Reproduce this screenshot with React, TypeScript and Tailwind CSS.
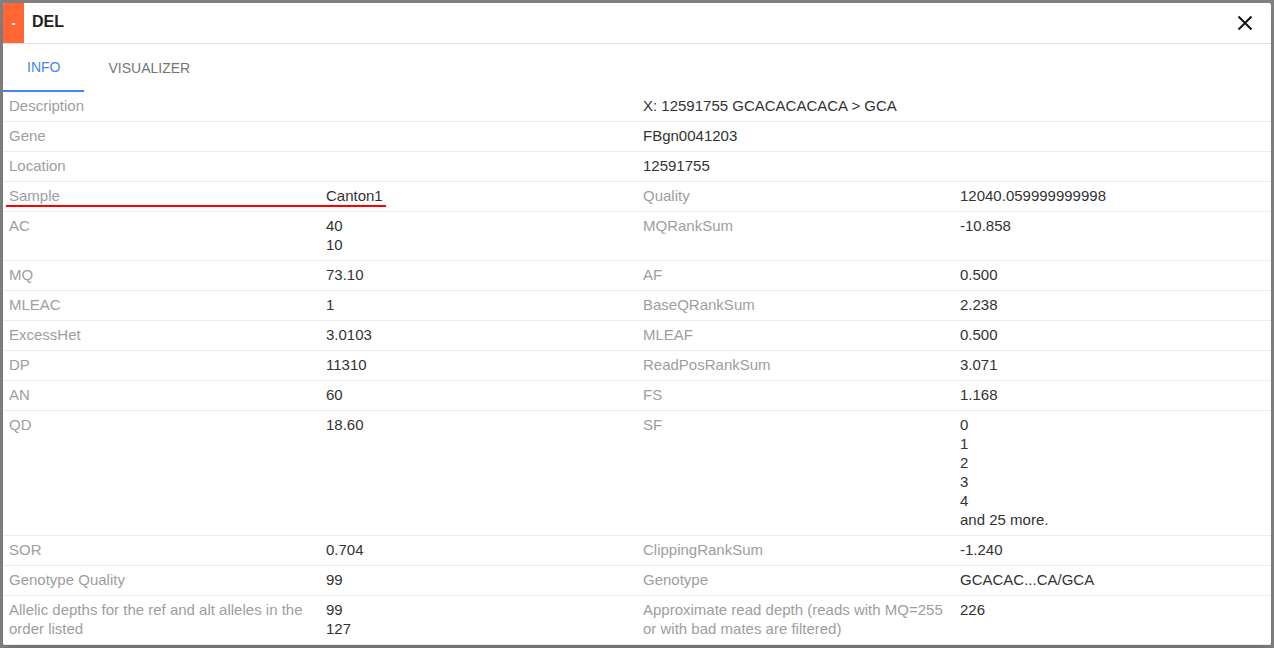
import React from "react";

type Cell = string | string[];
type Row = { kind: "wide"; label: string; value: string } | { kind: "pair"; a: [string, Cell]; b: [string, Cell] };

const rows: Row[] = [
  { kind: "wide", label: "Description", value: "X: 12591755 GCACACACACA > GCA" },
  { kind: "wide", label: "Gene", value: "FBgn0041203" },
  { kind: "wide", label: "Location", value: "12591755" },
  { kind: "pair", a: ["Sample", "Canton1"], b: ["Quality", "12040.059999999998"] },
  { kind: "pair", a: ["AC", ["40", "10"]], b: ["MQRankSum", "-10.858"] },
  { kind: "pair", a: ["MQ", "73.10"], b: ["AF", "0.500"] },
  { kind: "pair", a: ["MLEAC", "1"], b: ["BaseQRankSum", "2.238"] },
  { kind: "pair", a: ["ExcessHet", "3.0103"], b: ["MLEAF", "0.500"] },
  { kind: "pair", a: ["DP", "11310"], b: ["ReadPosRankSum", "3.071"] },
  { kind: "pair", a: ["AN", "60"], b: ["FS", "1.168"] },
  { kind: "pair", a: ["QD", "18.60"], b: ["SF", ["0", "1", "2", "3", "4", "and 25 more."]] },
  { kind: "pair", a: ["SOR", "0.704"], b: ["ClippingRankSum", "-1.240"] },
  { kind: "pair", a: ["Genotype Quality", "99"], b: ["Genotype", "GCACAC...CA/GCA"] },
  {
    kind: "pair",
    a: ["Allelic depths for the ref and alt alleles in the order listed", ["99", "127"]],
    b: ["Approximate read depth (reads with MQ=255 or with bad mates are filtered)", "226"],
  },
];

const Label = ({ children }: { children: React.ReactNode }) => (
  <div className="px-[6px] pt-[4px] pb-[6px] text-[#9e9e9e]">{children}</div>
);

const Value = ({ v }: { v: Cell }) => (
  <div className="px-[6px] pt-[4px] pb-[6px] text-[#333333]">
    {Array.isArray(v) ? v.map((x, i) => <div key={i}>{x}</div>) : v}
  </div>
);

const App: React.FC = () => {
  return (
    <div className="w-[1274px] h-[648px] bg-[#808080] p-[3px] overflow-hidden font-['Liberation_Sans',Arial,sans-serif]">
      <div className="w-[1268px] h-[642px] bg-white rounded-[2px] shadow-lg overflow-hidden flex flex-col">
        {/* header */}
        <div className="h-[41px] flex items-stretch border-b border-[#e0e0e0] shrink-0">
          <div className="w-[21px] bg-[#ff6633] flex items-center justify-center">
            <span className="block w-[3px] h-[2px] bg-white mt-[2px]" />
          </div>
          <div className="pl-[8px] pt-[9px] text-[16px] font-bold text-[#212121] leading-[19px]">DEL</div>
          <div className="flex-1" />
          <div className="pr-[18px] pt-[12px]">
            <svg width="16" height="16" viewBox="0 0 16 16">
              <path d="M1.5 1.5 L14.5 14.5 M14.5 1.5 L1.5 14.5" stroke="#111" strokeWidth="2" />
            </svg>
          </div>
        </div>

        {/* tabs */}
        <div className="flex h-[48px] shrink-0 text-[14px]">
          <div className="px-[24px] flex items-center text-[#4285f4] border-b-2 border-[#4285f4]">INFO</div>
          <div className="px-[24px] flex items-center text-[#757575]">VISUALIZER</div>
        </div>

        {/* table */}
        <div className="text-[15px] leading-[19px]">
          {rows.map((r, i) =>
            r.kind === "wide" ? (
              <div key={i} className="grid grid-cols-4 border-b border-[#ebebeb]">
                <div className="col-span-2">
                  <Label>{r.label}</Label>
                </div>
                <div className="col-span-2">
                  <Value v={r.value} />
                </div>
              </div>
            ) : (
              <div key={i} className="relative grid grid-cols-4 border-b border-[#ebebeb]">
                <Label>{r.a[0]}</Label>
                <Value v={r.a[1]} />
                <Label>{r.b[0]}</Label>
                <Value v={r.b[1]} />
                {r.a[0] === "Sample" && (
                  <span className="absolute left-[3px] top-[23px] w-[380px] h-[2px] bg-[#ff0000]" />
                )}
              </div>
            )
          )}
        </div>
      </div>
    </div>
  );
};

export default App;
